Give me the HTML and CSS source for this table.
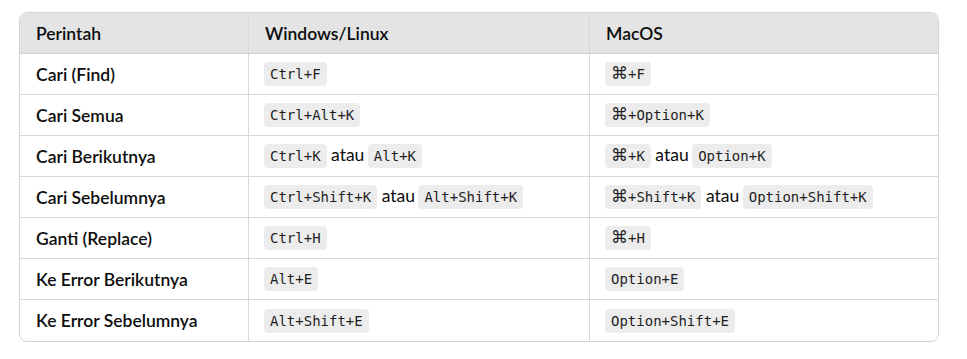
FILE: index.html
```html
<!DOCTYPE html>
<html lang="id">
<head>
<meta charset="utf-8">
<title>Pintasan</title>
<link rel="stylesheet" href="styles.css">
</head>
<body>
<div class="wrap">
<table class="shortcuts">
<thead>
<tr><th>Perintah</th><th>Windows/Linux</th><th>MacOS</th></tr>
</thead>
<tbody>
<tr><td class="cmd">Cari (Find)</td><td><code>Ctrl+F</code></td><td><code><span class="cmdkey">⌘</span>+F</code></td></tr>
<tr><td class="cmd">Cari Semua</td><td><code>Ctrl+Alt+K</code></td><td><code><span class="cmdkey">⌘</span>+Option+K</code></td></tr>
<tr><td class="cmd">Cari Berikutnya</td><td><code>Ctrl+K</code> atau <code>Alt+K</code></td><td><code><span class="cmdkey">⌘</span>+K</code> atau <code>Option+K</code></td></tr>
<tr><td class="cmd">Cari Sebelumnya</td><td><code>Ctrl+Shift+K</code> atau <code>Alt+Shift+K</code></td><td><code><span class="cmdkey">⌘</span>+Shift+K</code> atau <code>Option+Shift+K</code></td></tr>
<tr><td class="cmd">Ganti (Replace)</td><td><code>Ctrl+H</code></td><td><code><span class="cmdkey">⌘</span>+H</code></td></tr>
<tr><td class="cmd">Ke Error Berikutnya</td><td><code>Alt+E</code></td><td><code>Option+E</code></td></tr>
<tr><td class="cmd">Ke Error Sebelumnya</td><td><code>Alt+Shift+E</code></td><td><code>Option+Shift+E</code></td></tr>
</tbody>
</table>
</div>
</body>
</html>
```
FILE: styles.css
```css
html, body {
  margin: 0;
  padding: 0;
  background: #ffffff;
}
body {
  padding: 12px 0 0 19px;
  font-family: "Lato", "Open Sans", sans-serif;
  color: #0d0d0d;
}
.wrap {
  width: 918px;
  border: 1px solid #d4d4d4;
  border-radius: 8px;
  overflow: hidden;
}
.shortcuts {
  width: 100%;
  border-collapse: separate;
  border-spacing: 0;
  table-layout: fixed;
}
.shortcuts th,
.shortcuts td {
  height: 41px;
  padding: 0 0 0 16px;
  text-align: left;
  vertical-align: middle;
  font-size: 17.5px;
  border-bottom: 1px solid #d9d9d9;
  border-right: 1px solid #d9d9d9;
  box-sizing: border-box;
  white-space: nowrap;
}
.shortcuts th:nth-child(1) { width: 229px; }
.shortcuts th:nth-child(2) { width: 341px; }
.shortcuts th:last-child,
.shortcuts td:last-child { border-right: none; }
.shortcuts tbody tr:last-child td { border-bottom: none; }
.shortcuts th {
  background: #e4e4e4;
  font-weight: 600;
  border-bottom: 1px solid #cfcfcf;
}
.shortcuts td {
  font-weight: 400;
}
.shortcuts td.cmd {
  font-weight: 600;
}
code {
  display: inline-block;
  font-family: "DejaVu Sans Mono", "Liberation Mono", monospace;
  font-size: 14px;
  line-height: 24px;
  padding: 0 6px;
  background: #ececec;
  border-radius: 4px;
  color: #1f1f1f;
  vertical-align: baseline;
  margin-left: -1px;
}
.cmdkey {
  font-family: "DejaVu Sans", sans-serif;
  font-size: 17px;
  line-height: 1;
}
```
